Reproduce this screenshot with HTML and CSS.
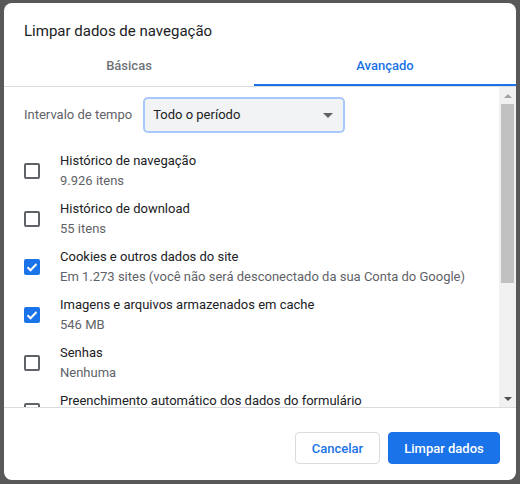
FILE: index.html
```html
<!DOCTYPE html>
<html lang="pt-BR">
<head>
    <meta charset="UTF-8">
    <meta name="viewport" content="width=device-width, initial-scale=1.0">
    <title>Limpar dados de navegação</title>
    <link rel="stylesheet" href="styles.css">
</head>
<body>
    <div class="dialog">
        <div class="dialog-title">Limpar dados de navegação</div>

        <div class="tabs">
            <div class="tab">Básicas</div>
            <div class="tab active">Avançado</div>
        </div>

        <div class="dialog-body">
            <div class="list">
                <div class="time-range">
                    <span class="range-label">Intervalo de tempo</span>
                    <div class="select">
                        <span>Todo o período</span>
                        <span class="caret"></span>
                    </div>
                </div>

                <div class="option">
                    <span class="checkbox"></span>
                    <div class="option-text">
                        <div class="option-label">Histórico de navegação</div>
                        <div class="option-sub">9.926 itens</div>
                    </div>
                </div>

                <div class="option">
                    <span class="checkbox"></span>
                    <div class="option-text">
                        <div class="option-label">Histórico de download</div>
                        <div class="option-sub">55 itens</div>
                    </div>
                </div>

                <div class="option">
                    <span class="checkbox checked">
                        <svg viewBox="0 0 16 16" width="16" height="16"><path d="M3.5 8.2l3 3 6-6.2" fill="none" stroke="#fff" stroke-width="2"/></svg>
                    </span>
                    <div class="option-text">
                        <div class="option-label">Cookies e outros dados do site</div>
                        <div class="option-sub">Em 1.273 sites (você não será desconectado da sua Conta do Google)</div>
                    </div>
                </div>

                <div class="option">
                    <span class="checkbox checked">
                        <svg viewBox="0 0 16 16" width="16" height="16"><path d="M3.5 8.2l3 3 6-6.2" fill="none" stroke="#fff" stroke-width="2"/></svg>
                    </span>
                    <div class="option-text">
                        <div class="option-label">Imagens e arquivos armazenados em cache</div>
                        <div class="option-sub">546 MB</div>
                    </div>
                </div>

                <div class="option">
                    <span class="checkbox"></span>
                    <div class="option-text">
                        <div class="option-label">Senhas</div>
                        <div class="option-sub">Nenhuma</div>
                    </div>
                </div>

                <div class="option">
                    <span class="checkbox"></span>
                    <div class="option-text">
                        <div class="option-label">Preenchimento automático dos dados do formulário</div>
                        <div class="option-sub">Nenhum</div>
                    </div>
                </div>
            </div>

            <div class="scrollbar">
                <div class="scroll-btn"><span class="arrow-up"></span></div>
                <div class="thumb"></div>
                <div class="track"></div>
                <div class="scroll-btn"><span class="arrow-down"></span></div>
            </div>
        </div>

        <div class="footer">
            <button class="btn btn-cancel">Cancelar</button>
            <button class="btn btn-primary">Limpar dados</button>
        </div>
    </div>
</body>
</html>
```

FILE: styles.css
```css
:root {
    --blue: #1a73e8;
    --text: #202124;
    --text-muted: #5f6368;
    --divider: #dadce0;
    --overlay: #585858;
}

* {
    box-sizing: border-box;
}

body {
    margin: 0;
    padding: 3px 4px 4px;
    height: 484px;
    background: var(--overlay);
    font-family: Roboto, "Liberation Sans", sans-serif;
    font-size: 13px;
    line-height: 20px;
    color: var(--text);
    overflow: hidden;
}

.dialog {
    width: 512px;
    height: 477px;
    background: #fff;
    border-radius: 8px;
    overflow: hidden;
    display: flex;
    flex-direction: column;
}

.dialog-title {
    padding: 18px 20px 6px;
    font-size: 15px;
    line-height: 20px;
}

.tabs {
    display: flex;
    height: 40px;
    border-bottom: 1px solid var(--divider);
}

.tab {
    flex: 0 0 250px;
    display: flex;
    align-items: center;
    justify-content: center;
    font-weight: 500;
    color: #6f7377;
    border-bottom: 2px solid transparent;
}

.tab.active {
    flex: 1;
    color: var(--blue);
    border-bottom-color: var(--blue);
}

.dialog-body {
    height: 321px;
    display: flex;
    border-bottom: 1px solid var(--divider);
}

.list {
    flex: 1;
    padding: 10px 0 0 20px;
    overflow: hidden;
}

.time-range {
    display: flex;
    align-items: center;
    gap: 11px;
    margin-bottom: 14px;
}

.range-label {
    color: var(--text-muted);
}

.select {
    width: 202px;
    height: 36px;
    padding: 0 8px;
    display: flex;
    align-items: center;
    justify-content: space-between;
    background: #f1f3f4;
    border: 2px solid #a8c7fa;
    border-radius: 5px;
}

.caret {
    width: 0;
    height: 0;
    border-left: 5px solid transparent;
    border-right: 5px solid transparent;
    border-top: 5px solid var(--text-muted);
    margin-right: 2px;
}

.option {
    height: 48px;
    display: flex;
    align-items: center;
    flex-shrink: 0;
}

.checkbox {
    width: 16px;
    height: 16px;
    flex-shrink: 0;
    margin-right: 20px;
    border: 2px solid var(--text-muted);
    border-radius: 2px;
    display: flex;
    align-items: center;
    justify-content: center;
}

.checkbox.checked {
    background: var(--blue);
    border-color: var(--blue);
}

.checkbox svg {
    flex-shrink: 0;
}

.option-sub {
    color: var(--text-muted);
}

.scrollbar {
    width: 17px;
    background: #f1f1f1;
    display: flex;
    flex-direction: column;
}

.scroll-btn {
    height: 17px;
    display: flex;
    align-items: center;
    justify-content: center;
}

.arrow-up,
.arrow-down {
    width: 0;
    height: 0;
    border-left: 4px solid transparent;
    border-right: 4px solid transparent;
}

.arrow-up {
    border-bottom: 4px solid #a3a3a3;
}

.arrow-down {
    border-top: 4px solid #505050;
}

.thumb {
    height: 179px;
    margin: 0 2px;
    background: #c1c1c1;
}

.track {
    flex: 1;
}

.footer {
    display: flex;
    justify-content: flex-end;
    gap: 8px;
    padding: 24px 16px 16px;
}

.btn {
    height: 32px;
    padding: 0;
    font-family: inherit;
    font-size: 13px;
    font-weight: 500;
    border-radius: 4px;
    border: 1px solid var(--divider);
    background: #fff;
    cursor: pointer;
}

.btn-cancel {
    width: 85px;
    color: var(--blue);
}

.btn-primary {
    width: 112px;
    color: #fff;
    background: var(--blue);
    border-color: var(--blue);
}
```
